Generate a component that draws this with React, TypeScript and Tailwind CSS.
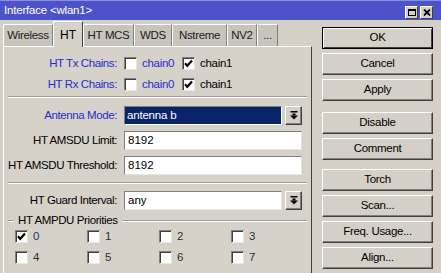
import React from 'react'

const font = { fontFamily: '"Liberation Sans", Arial, sans-serif' }

function Check({ checked }: { checked?: boolean }) {
  return (
    <span className="w-[13px] h-[13px] bg-white border border-t-[#808080] border-l-[#808080] border-r-[#e8e6e2] border-b-[#e8e6e2] shadow-[inset_1px_1px_0_#404040] flex items-center justify-center shrink-0">
      {checked && (
        <svg width="9" height="9" viewBox="0 0 9 9">
          <path d="M1 4.2 L3.2 6.8 L8 1.6" stroke="#000" strokeWidth="2.2" fill="none" />
        </svg>
      )}
    </span>
  )
}

function DropBtn() {
  return (
    <div className="w-[17px] h-[19px] ml-[3px] bg-[#d4d0c8] border border-t-white border-l-white border-r-[#404040] border-b-[#404040] shadow-[inset_-1px_-1px_0_#808080] flex items-center justify-center">
      <svg width="8" height="9" viewBox="0 0 8 9">
        <rect x="0.5" y="0" width="7" height="1.5" fill="#000" />
        <rect x="2.5" y="2.5" width="3" height="2" fill="#000" />
        <path d="M0 4.5 L8 4.5 L4 8.5 Z" fill="#000" />
      </svg>
    </div>
  )
}

function Btn({ label, def }: { label: string; def?: boolean }) {
  return (
    <div
      className={`h-[22px] flex items-center justify-center text-[11.5px] tracking-[-0.3px] text-black bg-[#d4d0c8] border ${
        def
          ? 'border-black shadow-[inset_1px_1px_0_#fff,inset_-1px_-1px_0_#404040]'
          : 'border-t-white border-l-white border-r-[#404040] border-b-[#404040] shadow-[inset_-1px_-1px_0_#808080]'
      }`}
    >
      {label}
    </div>
  )
}

function Sep() {
  return <div className="mx-[4px] h-[2px] border-t border-t-[#a09c94] border-b border-b-white" />
}

function Row({ label, blue, children, mt }: { label: string; blue?: boolean; children: React.ReactNode; mt: string }) {
  return (
    <div className={`flex items-center ${mt}`}>
      <div className={`w-[113px] text-right text-[11.5px] tracking-[-0.4px] ${blue ? 'text-[#2a2ad0]' : 'text-black'}`}>
        {label}
      </div>
      <div className="ml-[7px] flex items-center">{children}</div>
    </div>
  )
}

const tabs = [
  { t: 'Wireless', w: 'w-[50px]' },
  { t: 'HT', w: 'w-[30px]', active: true },
  { t: 'HT MCS', w: 'w-[51px]' },
  { t: 'WDS', w: 'w-[38px]' },
  { t: 'Nstreme', w: 'w-[55px]' },
  { t: 'NV2', w: 'w-[30px]' },
  { t: '...', w: 'w-[21px]' },
]

export default function App() {
  return (
    <div className="w-[441px] h-[273px] bg-[#d4d0c8] overflow-hidden select-none" style={font}>
      {/* title bar */}
      <div className="h-[20px] bg-[#4c52c8] border-t border-t-[#8a8ee0] flex items-center justify-between pl-[4px] pr-[8px]">
        <span className="text-white text-[11.5px] tracking-[-0.2px]">Interface &lt;wlan1&gt;</span>
        <div className="flex gap-[2px] mt-[4px]">
          <div className="w-[13px] h-[13px] bg-[#d4d0c8] border border-t-white border-l-white border-r-[#404040] border-b-[#404040] flex items-center justify-center">
            <div className="w-[8px] h-[7px] border border-black border-t-2" />
          </div>
          <div className="w-[13px] h-[13px] bg-[#d4d0c8] border border-t-white border-l-white border-r-[#404040] border-b-[#404040] flex items-center justify-center">
            <svg width="8" height="7" viewBox="0 0 8 7">
              <path d="M1 0.5 L7 6.5 M7 0.5 L1 6.5" stroke="#000" strokeWidth="1.8" />
            </svg>
          </div>
        </div>
      </div>

      <div className="flex">
        {/* left: tabs + panel */}
        <div className="w-[309px] ml-[3px] mt-[2px]">
          <div className="h-[24px] flex items-end relative z-10">
            {tabs.map((tb) =>
              tb.active ? (
                <div
                  key={tb.t}
                  className={`${tb.w} h-[26px] -mb-[1px] bg-[#d6d2ca] border-t border-l border-t-white border-l-white border-r border-r-[#404040] flex items-center justify-center text-[12px] text-black`}
                >
                  {tb.t}
                </div>
              ) : (
                <div
                  key={tb.t}
                  className={`${tb.w} h-[22px] bg-[#c8c4bc] border-t border-l border-t-white border-l-white border-r border-r-[#808080] flex items-center justify-center text-[11.5px] tracking-[-0.35px] text-[#202020]`}
                >
                  {tb.t}
                </div>
              )
            )}
          </div>
          <div className="h-[240px] bg-[#d6d2ca] border-t border-l border-t-white border-l-white border-r border-r-[#404040]">
            <Row label="HT Tx Chains:" blue mt="mt-[6px]">
              <div className="flex items-center h-[21px]">
                <Check />
                <span className="ml-[5px] w-[40px] text-[11.5px] tracking-[-0.3px] text-[#2a2ad0]">chain0</span>
                <Check checked />
                <span className="ml-[5px] text-[11.5px] tracking-[-0.3px] text-black">chain1</span>
              </div>
            </Row>
            <Row label="HT Rx Chains:" blue mt="mt-0">
              <div className="flex items-center h-[21px]">
                <Check />
                <span className="ml-[5px] w-[40px] text-[11.5px] tracking-[-0.3px] text-[#2a2ad0]">chain0</span>
                <Check checked />
                <span className="ml-[5px] text-[11.5px] tracking-[-0.3px] text-black">chain1</span>
              </div>
            </Row>
            <div className="mt-[1px]">
              <Sep />
            </div>
            <Row label="Antenna Mode:" blue mt="mt-[8px]">
              <div className="w-[158px] h-[19px] bg-[#0a246a] border border-t-[#808080] border-l-[#808080] border-r-white border-b-white flex items-center pl-[2px] text-[11.5px] tracking-[-0.2px] text-white">
                antenna b
              </div>
              <DropBtn />
            </Row>
            <Row label="HT AMSDU Limit:" mt="mt-[6px]">
              <div className="w-[178px] h-[19px] bg-white border border-t-[#808080] border-l-[#808080] border-r-[#e8e6e2] border-b-[#e8e6e2] flex items-center pl-[3px] text-[11.5px] text-black">
                8192
              </div>
            </Row>
            <Row label="HT AMSDU Threshold:" mt="mt-[6px]">
              <div className="w-[178px] h-[19px] bg-white border border-t-[#808080] border-l-[#808080] border-r-[#e8e6e2] border-b-[#e8e6e2] flex items-center pl-[3px] text-[11.5px] text-black">
                8192
              </div>
            </Row>
            <div className="mt-[7px]">
              <Sep />
            </div>
            <Row label="HT Guard Interval:" mt="mt-[7px]">
              <div className="w-[158px] h-[19px] bg-white border border-t-[#808080] border-l-[#808080] border-r-[#e8e6e2] border-b-[#e8e6e2] flex items-center pl-[3px] text-[11.5px] text-black">
                any
              </div>
              <DropBtn />
            </Row>
            {/* group box */}
            <div className="mt-[4px] flex items-center h-[14px] pl-[4px] pr-[4px]">
              <div className="w-[6px] h-[2px] border-t border-t-[#a09c94] border-b border-b-white" />
              <span className="px-[4px] text-[11.5px] tracking-[-0.4px] text-black">HT AMPDU Priorities</span>
              <div className="flex-1 h-[2px] border-t border-t-[#a09c94] border-b border-b-white" />
            </div>
            <div className="mt-[2px] pl-[11px] grid grid-cols-[72px_72px_72px_72px] gap-y-[8px]">
              {['0', '1', '2', '3', '4', '5', '6', '7'].map((n) => (
                <div key={n} className="flex items-center h-[13px]">
                  <Check checked={n === '0'} />
                  <span className={`ml-[5px] text-[11.5px] ${n === '0' ? 'text-[#243070]' : 'text-[#303030]'}`}>{n}</span>
                </div>
              ))}
            </div>
          </div>
        </div>

        {/* right: buttons */}
        <div className="ml-[10px] w-[111px] pt-[7px] flex flex-col">
          <div className="flex flex-col gap-[4px]">
            <Btn label="OK" def />
            <Btn label="Cancel" />
            <Btn label="Apply" />
          </div>
          <div className="mt-[11px] flex flex-col gap-[4px]">
            <Btn label="Disable" />
            <Btn label="Comment" />
          </div>
          <div className="mt-[9px] flex flex-col gap-[4px]">
            <Btn label="Torch" />
            <Btn label="Scan..." />
            <Btn label="Freq. Usage..." />
            <Btn label="Align..." />
          </div>
        </div>
      </div>
    </div>
  )
}
